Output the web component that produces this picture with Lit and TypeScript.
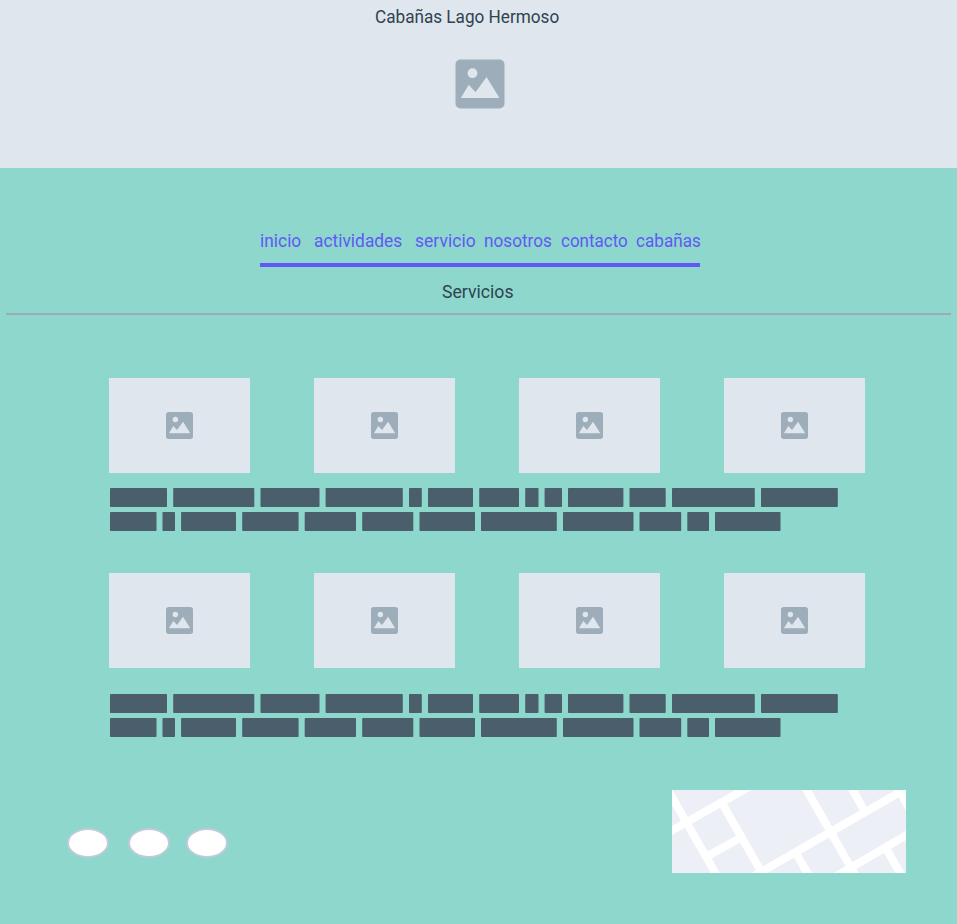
import { LitElement, html, svg, css } from "lit";
import { customElement, property } from "lit/decorators.js";
import { styleMap } from "lit/directives/style-map.js";

@customElement("image-icon")
class ImageIcon extends LitElement {
  static styles = css`
    :host { display: block; }
    svg { display: block; width: 100%; height: 100%; }
    .frame { fill: #9eadba; }
    .scene { fill: #dfe6ee; }
  `;
  @property() box = "0 0 49 49";
  render() {
    return html`<svg viewBox=${this.box}>
      <rect class="frame" width="49" height="49" rx="5"></rect>
      <circle class="scene" cx="17" cy="13.7" r="4.9"></circle>
      <path class="scene" d="M5.3 38.5 13.3 25.3 20 32.7 31 17.5 44 38.5Z"></path>
    </svg>`;
  }
}

const LINES: [number, number][][] = [
  [[0, 57], [63.2, 144.3], [150.5, 209.5], [215.6, 292.8], [299, 311.8], [318, 363], [369.2, 409],
   [415.2, 428.5], [434.6, 452], [458, 513.4], [519.5, 555.7], [562, 644.8], [651, 727.8]],
  [[0, 46.5], [52.5, 65], [71.1, 126], [132.2, 188.6], [194.7, 246], [252.2, 303.3], [309.5, 365],
   [371, 446.8], [453, 523.5], [529.5, 571.2], [577.3, 599], [605, 670.5]],
];

@customElement("text-blocks")
class TextBlocks extends LitElement {
  static styles = css`
    :host { display: block; }
    svg { display: block; width: 730px; height: 43px; fill: #4b5e6c; }
  `;
  render() {
    return html`<svg viewBox="0 0 730 43">
      ${LINES.map((line, i) => line.map(([a, b]) =>
        svg`<rect x=${a} y=${i * 24} width=${b - a} height="19" rx="0.8"></rect>`))}
    </svg>`;
  }
}

@customElement("street-map")
class StreetMap extends LitElement {
  static styles = css`
    :host { display: block; background: #eceff5; }
    svg { display: block; width: 234px; height: 83px; }
    path { fill: none; stroke: #fff; stroke-width: 8; }
  `;
  render() {
    return html`<svg viewBox="0 0 234 83">
      <path d="M-7 44.5 78.3 -4M-10.2 -10.5 48 91M50.5 14 94.6 91M36.3 65.7 67 48.6
        M80.3 87 241 -5.3M129 -10 186.6 91M175 -10 192 20M163 87 241 41.3
        M125 65 140 91M213.5 57.5 232.6 91M228 2 240 23"></path>
    </svg>`;
  }
}

@customElement("photo-row")
class PhotoRow extends LitElement {
  static styles = css`
    :host { display: grid; grid-template-columns: repeat(4, 141px); column-gap: 64px; }
    .photo { height: 95px; background: #dfe6ee; display: grid; place-items: center; }
    .icon { width: 27px; height: 27px; }
  `;
  render() {
    return [0, 1, 2, 3].map(() => html`<div class="photo"><image-icon class="icon"></image-icon></div>`);
  }
}

const MENU: [string, number][] = [
  ["inicio", 0.965], ["actividades", 0.965], ["servicio", 0.975],
  ["nosotros", 0.955], ["contacto", 0.945], ["cabañas", 0.953],
];

@customElement("app-root")
class AppRoot extends LitElement {
  static styles = css`
    :host {
      display: block; height: 924px; box-sizing: border-box; overflow: hidden;
      background: #8dd7cd; color: #2f4350;
      font: 400 18px/24px Roboto, "Liberation Sans", sans-serif;
    }
    header { height: 168px; background: #dfe6ee; display: flex; flex-direction: column; }
    .title {
      font: inherit; margin: 5px 0 0 375px; white-space: nowrap;
      transform: scaleX(0.953); transform-origin: 0 0;
    }
    .logo { width: 50px; height: 50px; margin: 30px 0 0 455px; }
    nav {
      display: grid; grid-template-columns: 54px 101px 69px 77px 74.5px 64.5px;
      width: 440px; height: 38px; box-sizing: border-box; margin: 61px 0 0 260px;
      border-bottom: 4px solid #6358f5;
    }
    nav a { color: #6358f5; white-space: nowrap; transform-origin: 0 0; }
    .heading {
      font: inherit; margin: 13px 6px 0; height: 35px; padding-left: 436px;
      box-sizing: border-box; border-bottom: 2px solid #a0a9b9;
    }
    .heading span { display: inline-block; transform: scaleX(0.98); transform-origin: 0 0; }
    .first { margin: 63px 0 0 109px; }
    .text1 { margin: 15px 0 0 110px; }
    .second { margin: 42px 0 0 109px; }
    .text2 { margin: 26px 0 0 110px; }
    footer { display: flex; justify-content: space-between; margin: 53px 51px 0 67px; }
    .social { display: flex; margin-top: 38px; }
    .dot {
      width: 42px; height: 30px; box-sizing: border-box; border: 2px solid #c0cbda;
      border-radius: 50%; background: #fff; margin-right: 19px;
    }
    .dot + .dot { margin-right: 16px; }
  `;
  render() {
    return html`
      <header>
        <h1 class="title">Cabañas Lago Hermoso</h1>
        <image-icon class="logo" box="-0.5 -0.5 50 50"></image-icon>
      </header>
      <nav>${MENU.map(([t, s]) => html`<a style=${styleMap({ transform: `scaleX(${s})` })}>${t}</a>`)}</nav>
      <h2 class="heading"><span>Servicios</span></h2>
      <photo-row class="first"></photo-row>
      <text-blocks class="text1"></text-blocks>
      <photo-row class="second"></photo-row>
      <text-blocks class="text2"></text-blocks>
      <footer>
        <div class="social"><i class="dot"></i><i class="dot"></i><i class="dot"></i></div>
        <street-map></street-map>
      </footer>
    `;
  }
}
